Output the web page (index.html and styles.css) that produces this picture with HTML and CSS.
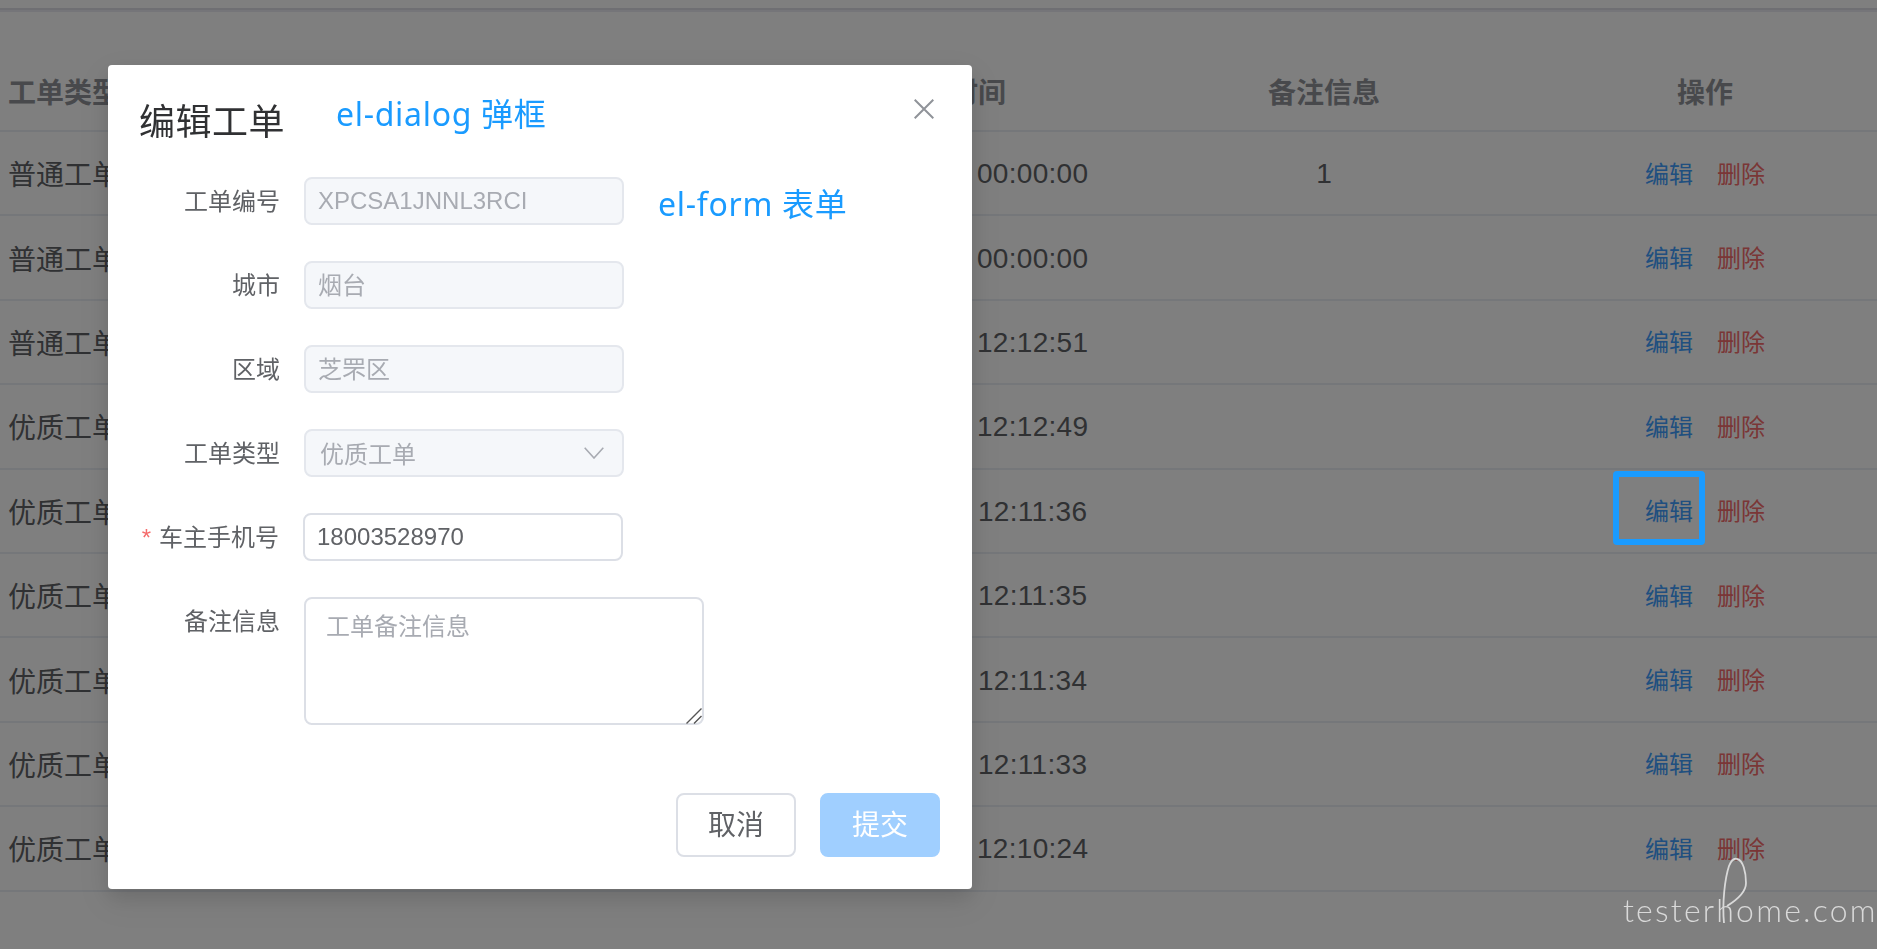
FILE: index.html
```html
<!DOCTYPE html>
<html lang="zh-CN">
<head>
<meta charset="utf-8">
<title>编辑工单</title>
<link rel="stylesheet" href="styles.css">
</head>
<body>
<div class="page">
  <div class="topbar"></div>
  <div class="table">
    <div class="row head"><div class="cell">工单类型</div><div class="cell"></div><div class="cell">创建时间</div><div class="cell">备注信息</div><div class="cell">操作</div></div>
    <div class="row"><div class="cell">普通工单</div><div class="cell"></div><div class="cell time">2022-03-09 00:00:00</div><div class="cell digit">1</div><div class="cell ops"><a class="edit">编辑</a><a class="del">删除</a></div></div>
    <div class="row"><div class="cell">普通工单</div><div class="cell"></div><div class="cell time">2022-03-08 00:00:00</div><div class="cell"></div><div class="cell ops"><a class="edit">编辑</a><a class="del">删除</a></div></div>
    <div class="row"><div class="cell">普通工单</div><div class="cell"></div><div class="cell time">2022-03-07 12:12:51</div><div class="cell"></div><div class="cell ops"><a class="edit">编辑</a><a class="del">删除</a></div></div>
    <div class="row"><div class="cell">优质工单</div><div class="cell"></div><div class="cell time">2022-03-07 12:12:49</div><div class="cell"></div><div class="cell ops"><a class="edit">编辑</a><a class="del">删除</a></div></div>
    <div class="row"><div class="cell">优质工单</div><div class="cell"></div><div class="cell time">2022-03-07 12:11:36</div><div class="cell"></div><div class="cell ops"><a class="edit">编辑</a><a class="del">删除</a></div></div>
    <div class="row"><div class="cell">优质工单</div><div class="cell"></div><div class="cell time">2022-03-07 12:11:35</div><div class="cell"></div><div class="cell ops"><a class="edit">编辑</a><a class="del">删除</a></div></div>
    <div class="row"><div class="cell">优质工单</div><div class="cell"></div><div class="cell time">2022-03-07 12:11:34</div><div class="cell"></div><div class="cell ops"><a class="edit">编辑</a><a class="del">删除</a></div></div>
    <div class="row"><div class="cell">优质工单</div><div class="cell"></div><div class="cell time">2022-03-07 12:11:33</div><div class="cell"></div><div class="cell ops"><a class="edit">编辑</a><a class="del">删除</a></div></div>
    <div class="row"><div class="cell">优质工单</div><div class="cell"></div><div class="cell time">2022-03-07 12:10:24</div><div class="cell"></div><div class="cell ops"><a class="edit">编辑</a><a class="del">删除</a></div></div>
  </div>
</div>

<div class="overlay"></div>

<div class="dialog">
  <header class="dialog-head">
    <h2 class="dialog-title">编辑工单</h2>
    <svg class="close" viewBox="0 0 20 20" aria-label="关闭"><path d="M0.7 0.7 19.3 19.3M19.3 0.7 0.7 19.3"/></svg>
  </header>
  <form class="form">
    <div class="field"><label class="label">工单编号</label><input class="input" disabled value="XPCSA1JNNL3RCI"></div>
    <div class="field"><label class="label">城市</label><input class="input cjk" disabled value="烟台"></div>
    <div class="field"><label class="label">区域</label><input class="input cjk" disabled value="芝罘区"></div>
    <div class="field"><label class="label">工单类型</label>
      <div class="select"><span>优质工单</span>
        <svg class="chevron" viewBox="0 0 20 12"><path d="M0.7 0.7 10 11 19.3 0.7"/></svg>
      </div>
    </div>
    <div class="field required"><label class="label"><span class="star">*</span>车主手机号</label><input class="input active" value="18003528970"></div>
    <div class="field"><label class="label">备注信息</label>
      <div class="textarea-wrap">
        <textarea class="textarea" placeholder="工单备注信息"></textarea>
        <svg class="grip" viewBox="0 0 16 16"><path d="M0.5 15.5 15.5 0.5M8 15.5 15.5 8"/></svg>
      </div>
    </div>
  </form>
  <footer class="dialog-foot">
    <button class="btn" type="button">取消</button>
    <button class="btn primary" type="button">提交</button>
  </footer>
</div>

<span class="note note-dialog">el-dialog 弹框</span>
<span class="note note-form">el-form 表单</span>
<div class="marker"></div>

<div class="watermark">
  <svg class="flourish" viewBox="0 0 24 65"><path d="M1 65C-1 45 2 20 6 8C8 3 11 0 14 1C20 2 23 14 23 25C23 33 17 40 4 48"/></svg>
  <span>testerhome.com</span>
</div>
</body>
</html>
```
FILE: styles.css
```css
* { box-sizing: border-box; }

html, body {
  margin: 0;
  height: 100%;
  overflow: hidden;
  background: #fff;
  font-family: "Liberation Sans", "Noto Sans CJK SC", sans-serif;
}

.topbar {
  height: 12px;
  padding-top: 8px;
  border-bottom: 2px solid #ebebf2;
}

.topbar::after {
  content: "";
  display: block;
  height: 2px;
  background: #dfdfe6;
}

.table {
  margin-top: 42px;
}

.row {
  display: grid;
  grid-template-columns: 128px 657px 330px 418px 344px;
  height: 84.4px;
  align-items: center;
  border-bottom: 2px solid #ebeef5;
  font-size: 28px;
  color: #606266;
  text-align: center;
}

.head {
  height: 78px;
  padding-bottom: 2px;
  font-weight: 700;
  color: #909399;
}

.cell { white-space: nowrap; }

.time {
  padding: 2px 0 0 11px;
  letter-spacing: 0.3px;
}

.digit { padding-top: 2px; }

.ops {
  display: flex;
  justify-content: center;
  gap: 24px;
  padding-bottom: 2px;
  font-size: 24px;
}

.edit { color: #409eff; }
.del { color: #f56c6c; }

.overlay {
  position: fixed;
  inset: 0;
  background: rgba(0, 0, 0, 0.5);
}

.dialog {
  position: absolute;
  left: 108px;
  top: 65px;
  width: 864px;
  height: 824px;
  background: #fff;
  border-radius: 4px;
  box-shadow: 0 12px 32px 4px rgba(0, 0, 0, 0.06), 0 8px 20px rgba(0, 0, 0, 0.1);
  display: flex;
  flex-direction: column;
}

.dialog-head {
  position: relative;
  height: 112px;
  padding: 33px 0 0 31px;
}

.dialog-title {
  margin: 0;
  font-size: 36px;
  font-weight: 400;
  line-height: 50px;
  letter-spacing: 0.5px;
  color: #303133;
}

.close {
  position: absolute;
  right: 38px;
  top: 34px;
  width: 20px;
  height: 20px;
  fill: none;
  stroke: #909399;
  stroke-width: 2;
}

.form {
  flex: 1;
  display: flex;
  flex-direction: column;
  gap: 36px;
}

.field {
  display: flex;
  align-items: flex-start;
}

.label {
  width: 172px;
  height: 48px;
  margin-right: 24px;
  padding-top: 1px;
  line-height: 47px;
  text-align: right;
  font-size: 24px;
  color: #606266;
  flex: none;
}

.required .label { width: 171px; }

.star {
  color: #f56c6c;
  margin-right: 8px;
}

.input, .select {
  width: 320px;
  height: 48px;
  border: 2px solid #e4e7ed;
  border-radius: 8px;
  background: #f5f7fa;
  font: 24px "Liberation Sans", "Noto Sans CJK SC", sans-serif;
  color: #a8abb2;
  padding: 0 12px;
  outline: none;
}

.input.cjk { padding-bottom: 3px; }

.input:disabled { -webkit-text-fill-color: #a8abb2; opacity: 1; }

.input.active {
  background: #fff;
  border-color: #dcdfe6;
  color: #606266;
}

.select {
  display: flex;
  align-items: center;
  justify-content: space-between;
  padding: 0 18px 2px 14px;
}

.chevron {
  width: 20px;
  height: 12px;
  fill: none;
  stroke: #a8abb2;
  stroke-width: 1.6;
  margin-top: 2px;
}

.textarea-wrap {
  position: relative;
  width: 400px;
  height: 128px;
}

.textarea {
  display: block;
  width: 100%;
  height: 100%;
  border: 2px solid #dcdfe6;
  border-radius: 8px;
  background: #fff;
  font: 24px "Liberation Sans", "Noto Sans CJK SC", sans-serif;
  padding: 8px 20px;
  color: #606266;
  outline: none;
  resize: none;
}

.textarea::placeholder { color: #a8abb2; opacity: 1; }

.grip {
  position: absolute;
  right: 2px;
  bottom: 1px;
  width: 16px;
  height: 16px;
  fill: none;
  stroke: #555;
  stroke-width: 1.4;
}

.dialog-foot {
  display: flex;
  justify-content: flex-end;
  gap: 24px;
  padding: 0 32px 32px;
}

.btn {
  width: 120px;
  height: 64px;
  border: 2px solid #dcdfe6;
  border-radius: 8px;
  background: #fff;
  color: #606266;
  font: 28px "Liberation Sans", "Noto Sans CJK SC", sans-serif;
  padding: 0 0 4px;
}

.btn.primary {
  background: #a0cfff;
  border-color: #a0cfff;
  color: #fff;
}

.note {
  position: absolute;
  font: 32px/44px "Noto Sans", "Noto Sans CJK SC", sans-serif;
  letter-spacing: 0.7px;
  color: #1a9bff;
  white-space: nowrap;
}

.note-dialog { left: 336px; top: 92px; }
.note-form { left: 658px; top: 182px; }

.marker {
  position: absolute;
  left: 1613px;
  top: 471px;
  width: 92px;
  height: 74px;
  border: 6px solid #1a9bff;
  border-radius: 4px;
}

.watermark {
  position: absolute;
  left: 1623px;
  top: 890px;
  font: 300 32px/40px "Lato", sans-serif;
  letter-spacing: 2.2px;
  color: #d9d9d9;
  white-space: nowrap;
}

.flourish {
  position: absolute;
  left: 100px;
  top: -32px;
  width: 24px;
  height: 65px;
  fill: none;
  stroke: #d9d9d9;
  stroke-width: 1.8;
  overflow: visible;
}
```
